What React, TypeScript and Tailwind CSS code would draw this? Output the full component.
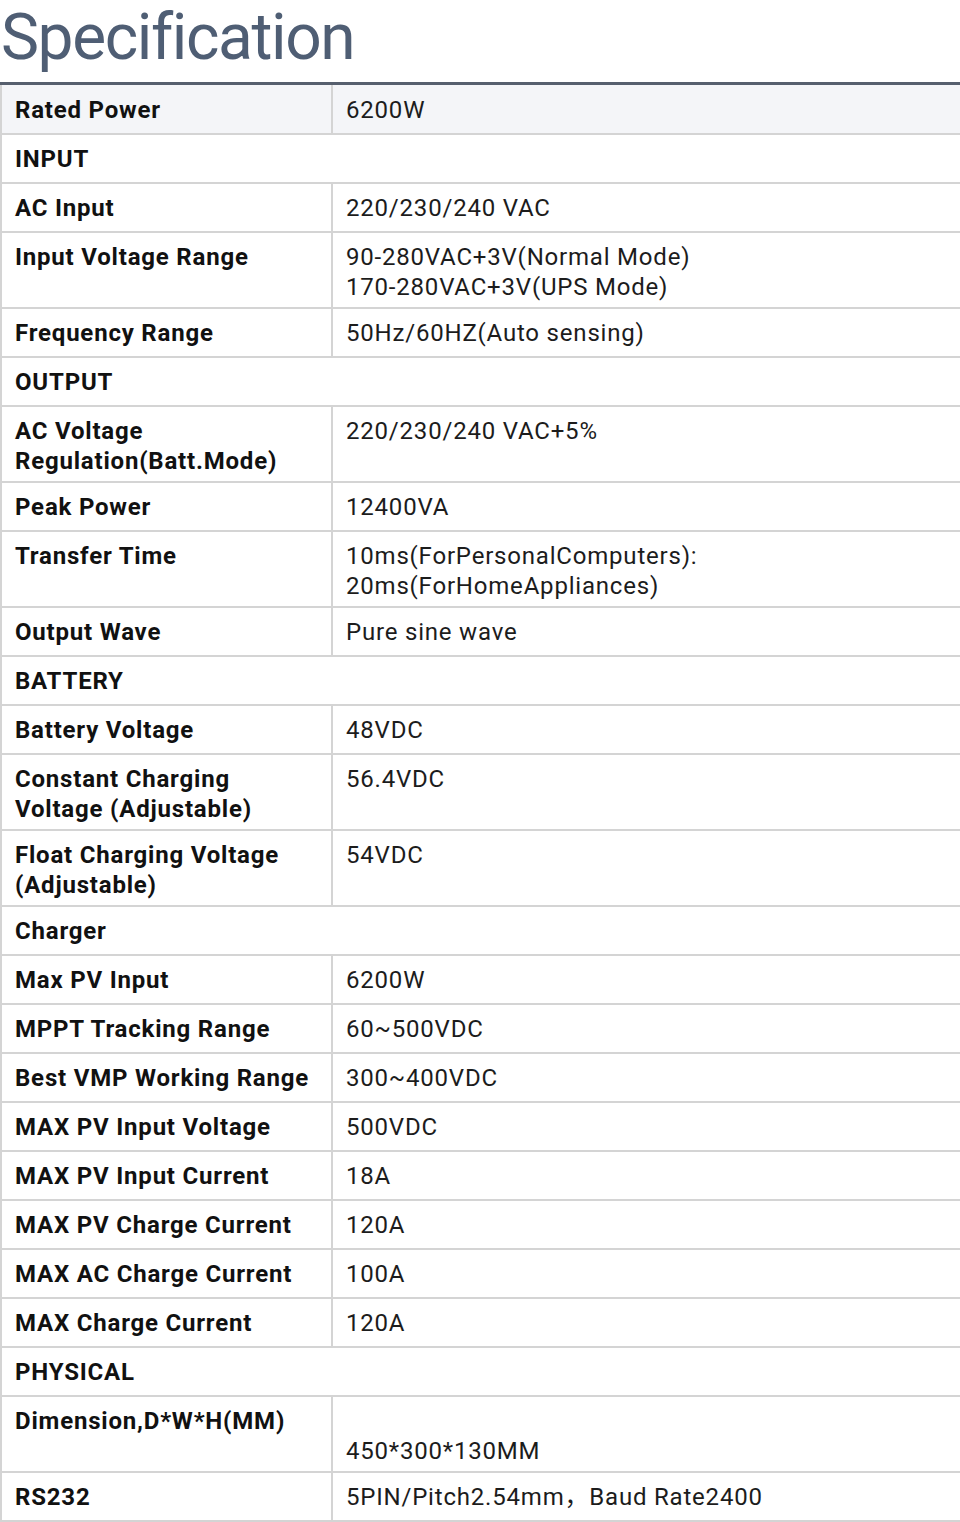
import React from "react";

type Row =
  | { type: "section"; label: string }
  | { type: "row"; label: React.ReactNode; value: React.ReactNode; shade?: boolean };

const rows: Row[] = [
  { type: "row", label: "Rated Power", value: "6200W", shade: true },
  { type: "section", label: "INPUT" },
  { type: "row", label: "AC Input", value: "220/230/240 VAC" },
  {
    type: "row",
    label: "Input Voltage Range",
    value: (
      <>
        90-280VAC+3V(Normal Mode)
        <br />
        170-280VAC+3V(UPS Mode)
      </>
    ),
  },
  { type: "row", label: "Frequency Range", value: "50Hz/60HZ(Auto sensing)" },
  { type: "section", label: "OUTPUT" },
  {
    type: "row",
    label: (
      <>
        AC Voltage
        <br />
        Regulation(Batt.Mode)
      </>
    ),
    value: "220/230/240 VAC+5%",
  },
  { type: "row", label: "Peak Power", value: "12400VA" },
  {
    type: "row",
    label: "Transfer Time",
    value: (
      <>
        10ms(ForPersonalComputers):
        <br />
        20ms(ForHomeAppliances)
      </>
    ),
  },
  { type: "row", label: "Output Wave", value: "Pure sine wave" },
  { type: "section", label: "BATTERY" },
  { type: "row", label: "Battery Voltage", value: "48VDC" },
  {
    type: "row",
    label: (
      <>
        Constant Charging
        <br />
        Voltage (Adjustable)
      </>
    ),
    value: "56.4VDC",
  },
  {
    type: "row",
    label: (
      <>
        Float Charging Voltage
        <br />
        (Adjustable)
      </>
    ),
    value: "54VDC",
  },
  { type: "section", label: "Charger" },
  { type: "row", label: "Max PV Input", value: "6200W" },
  { type: "row", label: "MPPT Tracking Range", value: "60~500VDC" },
  { type: "row", label: "Best VMP Working Range", value: "300~400VDC" },
  { type: "row", label: "MAX PV Input Voltage", value: "500VDC" },
  { type: "row", label: "MAX PV Input Current", value: "18A" },
  { type: "row", label: "MAX PV Charge Current", value: "120A" },
  { type: "row", label: "MAX AC Charge Current", value: "100A" },
  { type: "row", label: "MAX Charge Current", value: "120A" },
  { type: "section", label: "PHYSICAL" },
  {
    type: "row",
    label: "Dimension,D*W*H(MM)",
    value: (
      <>
        <br />
        450*300*130MM
      </>
    ),
  },
  { type: "row", label: "RS232", value: "5PIN/Pitch2.54mm，Baud Rate2400" },
];

export default function App() {
  return (
    <div
      className="w-[960px] bg-white overflow-hidden"
      style={{ fontFamily: "Roboto, 'Noto Sans CJK SC', sans-serif" }}
    >
      <h1 className="text-[64px] leading-[75px] font-normal text-[#4f5e74] pl-[1px] tracking-[-1.4px] mb-[7px]">
        Specification
      </h1>
      <div className="h-[3px] bg-[#565f6e]" />
      <table className="w-full border-collapse text-[24px] leading-[30px] tracking-[0.8px]">
        <tbody>
          {rows.map((r, i) =>
            r.type === "section" ? (
              <tr key={i}>
                <td
                  colSpan={2}
                  className="border-l-2 border-b-2 border-[#d4d4d4] px-[13px] pt-[9px] pb-[5px] font-bold text-[#111] align-top"
                >
                  <div className="min-h-[33px]">{r.label}</div>
                </td>
              </tr>
            ) : (
              <tr key={i} className={r.shade ? "bg-[#f4f5f8]" : ""}>
                <td
                  className={`w-[331px] border-l-2 border-r-2 border-b-2 border-[#d4d4d4] px-[13px] ${
                    r.shade ? "pt-[10px] pb-[5px]" : "pt-[9px] pb-[5px]"
                  } font-bold text-[#111] align-top`}
                >
                  <div className="min-h-[33px]">{r.label}</div>
                </td>
                <td
                  className={`border-b-2 border-[#d4d4d4] px-[13px] ${
                    r.shade ? "pt-[10px] pb-[5px]" : "pt-[9px] pb-[5px]"
                  } text-[#1c1c1c] align-top`}
                >
                  <div className="min-h-[33px]">{r.value}</div>
                </td>
              </tr>
            )
          )}
        </tbody>
      </table>
    </div>
  );
}
